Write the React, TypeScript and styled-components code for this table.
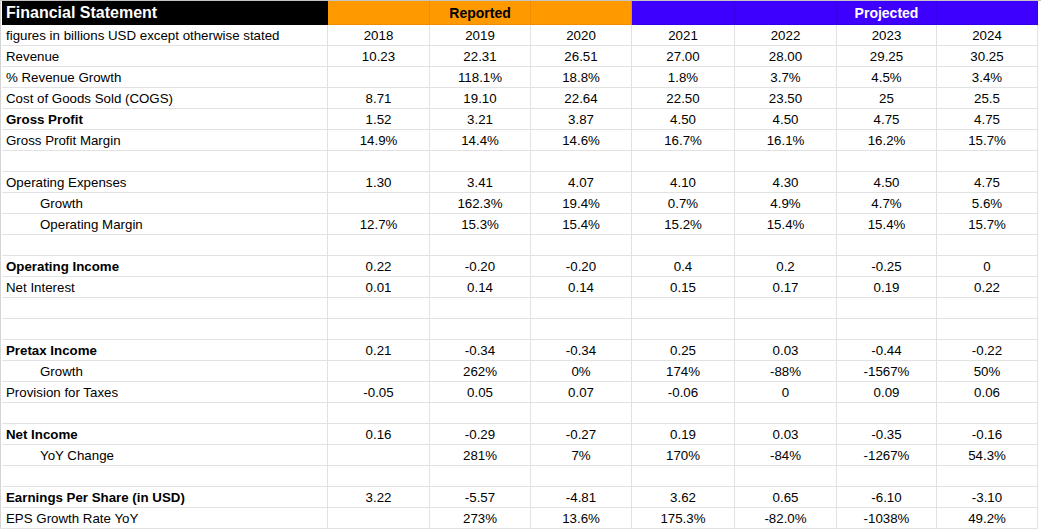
import styled, { createGlobalStyle, css } from 'styled-components'

const GlobalStyle = createGlobalStyle`
    body {
        margin: 0;
        background: #ffffff;
        font-family: "Liberation Sans", Arial, sans-serif;
    }
`

const COLUMNS = '326px 102px 101px 101px 103px 102px 100px 101px'

const Sheet = styled.div`
    width: 1041px;
    border-top: 1px solid #c4c4c4;
    border-left: 1px solid #d4d4d4;
    padding-left: 1px;
    box-sizing: border-box;
`

const HeaderRow = styled.div`
    display: grid;
    grid-template-columns: ${COLUMNS};
    height: 24px;
`

const fills = {
    black: { bg: '#000000', fg: '#ffffff', line: '#000000' },
    orange: { bg: '#ff9900', fg: '#000000', line: '#f08c00' },
    purple: { bg: '#3d00ff', fg: '#ffffff', line: '#3600e6' },
}

type Fill = keyof typeof fills

const HeaderCell = styled.div<{ $fill: Fill; $title?: boolean }>`
    display: flex;
    align-items: center;
    justify-content: ${(p) => (p.$title ? 'flex-start' : 'center')};
    box-sizing: border-box;
    padding: ${(p) => (p.$title ? '0 0 0 4px' : '0')};
    background-color: ${(p) => fills[p.$fill].bg};
    color: ${(p) => fills[p.$fill].fg};
    border-right: 1px solid ${(p) => fills[p.$fill].line};
    border-bottom: 1px solid ${(p) => fills[p.$fill].line};
    font-weight: bold;
    font-size: ${(p) => (p.$title ? '16px' : '14px')};
    white-space: nowrap;
`

const Row = styled.div`
    display: grid;
    grid-template-columns: ${COLUMNS};
    height: 21px;
`

const cellBase = css`
    display: flex;
    align-items: center;
    box-sizing: border-box;
    border-right: 1px solid #e2e2e2;
    border-bottom: 1px solid #e2e2e2;
    font-size: 13.3px;
    color: #000000;
    white-space: nowrap;
    overflow: hidden;
`

const LabelCell = styled.div<{ $bold?: boolean; $indent?: boolean }>`
    ${cellBase}
    padding-left: ${(p) => (p.$indent ? '38px' : '4px')};
    font-weight: ${(p) => (p.$bold ? 'bold' : 'normal')};
`

const ValueCell = styled.div`
    ${cellBase}
    justify-content: center;
`

type Line = {
    label: string
    values?: string[]
    bold?: boolean
    indent?: boolean
}

const lines: Line[] = [
    { label: 'figures in billions USD except otherwise stated', values: ['2018', '2019', '2020', '2021', '2022', '2023', '2024'] },
    { label: 'Revenue', values: ['10.23', '22.31', '26.51', '27.00', '28.00', '29.25', '30.25'] },
    { label: '% Revenue Growth', values: ['', '118.1%', '18.8%', '1.8%', '3.7%', '4.5%', '3.4%'] },
    { label: 'Cost of Goods Sold (COGS)', values: ['8.71', '19.10', '22.64', '22.50', '23.50', '25', '25.5'] },
    { label: 'Gross Profit', bold: true, values: ['1.52', '3.21', '3.87', '4.50', '4.50', '4.75', '4.75'] },
    { label: 'Gross Profit Margin', values: ['14.9%', '14.4%', '14.6%', '16.7%', '16.1%', '16.2%', '15.7%'] },
    { label: '' },
    { label: 'Operating Expenses', values: ['1.30', '3.41', '4.07', '4.10', '4.30', '4.50', '4.75'] },
    { label: 'Growth', indent: true, values: ['', '162.3%', '19.4%', '0.7%', '4.9%', '4.7%', '5.6%'] },
    { label: 'Operating Margin', indent: true, values: ['12.7%', '15.3%', '15.4%', '15.2%', '15.4%', '15.4%', '15.7%'] },
    { label: '' },
    { label: 'Operating Income', bold: true, values: ['0.22', '-0.20', '-0.20', '0.4', '0.2', '-0.25', '0'] },
    { label: 'Net Interest', values: ['0.01', '0.14', '0.14', '0.15', '0.17', '0.19', '0.22'] },
    { label: '' },
    { label: '' },
    { label: 'Pretax Income', bold: true, values: ['0.21', '-0.34', '-0.34', '0.25', '0.03', '-0.44', '-0.22'] },
    { label: 'Growth', indent: true, values: ['', '262%', '0%', '174%', '-88%', '-1567%', '50%'] },
    { label: 'Provision for Taxes', values: ['-0.05', '0.05', '0.07', '-0.06', '0', '0.09', '0.06'] },
    { label: '' },
    { label: 'Net Income', bold: true, values: ['0.16', '-0.29', '-0.27', '0.19', '0.03', '-0.35', '-0.16'] },
    { label: 'YoY Change', indent: true, values: ['', '281%', '7%', '170%', '-84%', '-1267%', '54.3%'] },
    { label: '' },
    { label: 'Earnings Per Share (in USD)', bold: true, values: ['3.22', '-5.57', '-4.81', '3.62', '0.65', '-6.10', '-3.10'] },
    { label: 'EPS Growth Rate YoY', values: ['', '273%', '13.6%', '175.3%', '-82.0%', '-1038%', '49.2%'] },
]

const headers: { fill: Fill; text: string }[] = [
    { fill: 'orange', text: '' },
    { fill: 'orange', text: 'Reported' },
    { fill: 'orange', text: '' },
    { fill: 'purple', text: '' },
    { fill: 'purple', text: '' },
    { fill: 'purple', text: 'Projected' },
    { fill: 'purple', text: '' },
]

export default function App() {
    return (
        <>
            <GlobalStyle />
            <Sheet>
                <HeaderRow>
                    <HeaderCell $fill="black" $title>Financial Statement</HeaderCell>
                    {headers.map((h, i) => (
                        <HeaderCell key={i} $fill={h.fill}>{h.text}</HeaderCell>
                    ))}
                </HeaderRow>
                {lines.map((line, i) => {
                    const values = line.values ?? ['', '', '', '', '', '', '']
                    return (
                        <Row key={i}>
                            <LabelCell $bold={line.bold} $indent={line.indent}>{line.label}</LabelCell>
                            {values.map((v, j) => (
                                <ValueCell key={j}>{v}</ValueCell>
                            ))}
                        </Row>
                    )
                })}
            </Sheet>
        </>
    )
}
